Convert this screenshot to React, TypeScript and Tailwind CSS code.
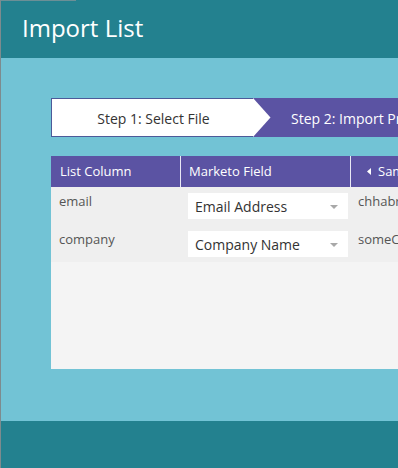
import React from "react";

const font = { fontFamily: '"Open Sans", "Noto Sans", Arial, sans-serif' };

function Select({ label }: { label: string }) {
  return (
    <div className="flex h-[26px] w-[160px] shrink-0 items-center justify-between bg-white pl-[7px] pr-[10px] pt-[2px]">
      <span className="text-[14px] leading-none text-[#333333]">{label}</span>
      <svg width="8" height="4" viewBox="0 0 8 4">
        <polygon points="0,0 8,0 4,4" fill="#a8a8a8" />
      </svg>
    </div>
  );
}

export default function App() {
  return (
    <div style={font} className="flex h-[468px] w-[398px] flex-col overflow-hidden border-l border-[#7d8b8e] bg-[#72c3d5]">
      <div className="relative flex h-[58px] shrink-0 items-center bg-[#23818f] pl-[21px] pb-[2px]">
        <div className="absolute left-0 top-0 h-px w-[75px] bg-[#6c8f96]" />
        <span className="text-[24px] leading-none text-white">Import List</span>
      </div>
      <div className="flex flex-1 flex-col pl-[50px] pt-[40px]">
        <div className="flex h-[39px] w-[420px] shrink-0">
          <div className="flex w-[202px] shrink-0 items-center justify-center border-y border-l border-[#4d5a99] bg-white pl-[2px] pt-px text-[14px] text-[#333333]">
            Step 1: Select File
          </div>
          <div className="relative flex flex-1 items-center bg-[#5b53a3] pl-[38px] pt-px text-[14px] text-white">
            <svg className="absolute left-0 top-0" width="18" height="39" viewBox="0 0 18 39">
              <polygon points="0,0 17.5,19.5 0,39" fill="#ffffff" />
            </svg>
            <span className="whitespace-nowrap">Step 2: Import Preview</span>
          </div>
        </div>
        <div className="mt-[19px] flex w-[420px] flex-col">
          <div className="flex h-[31px] bg-[#5b53a3] text-[13px] text-white">
            <div className="flex w-[130px] shrink-0 items-center border-r border-[#e8e8f4] pl-[9px]">List Column</div>
            <div className="flex w-[170px] shrink-0 items-center border-r border-[#e8e8f4] pl-[8px]">Marketo Field</div>
            <div className="flex flex-1 items-center gap-[7px] pl-[16px] whitespace-nowrap">
              <svg width="4" height="7" viewBox="0 0 4 7">
                <polygon points="4,0 4,7 0,3.5" fill="#ffffff" />
              </svg>
              <span>Sample</span>
            </div>
          </div>
          <div className="flex flex-col bg-[#efefef] pb-[5px] pt-[6px] text-[13px] text-[#555555]">
            {[
              ["email", "Email Address", "chhabra"],
              ["company", "Company Name", "someCo"],
            ].map(([col, field, sample], i) => (
              <div key={col} className={`flex h-[26px] ${i > 0 ? "mt-[12px]" : ""}`}>
                <div className="w-[137px] shrink-0 pl-[8px] leading-[16px]">{col}</div>
                <Select label={field} />
                <div className="pl-[10px] leading-[16px] whitespace-nowrap">{sample}</div>
              </div>
            ))}
          </div>
          <div className="h-[107px] bg-[#f4f4f4]" />
        </div>
      </div>
      <div className="h-[47px] shrink-0 bg-[#23818f]" />
    </div>
  );
}
